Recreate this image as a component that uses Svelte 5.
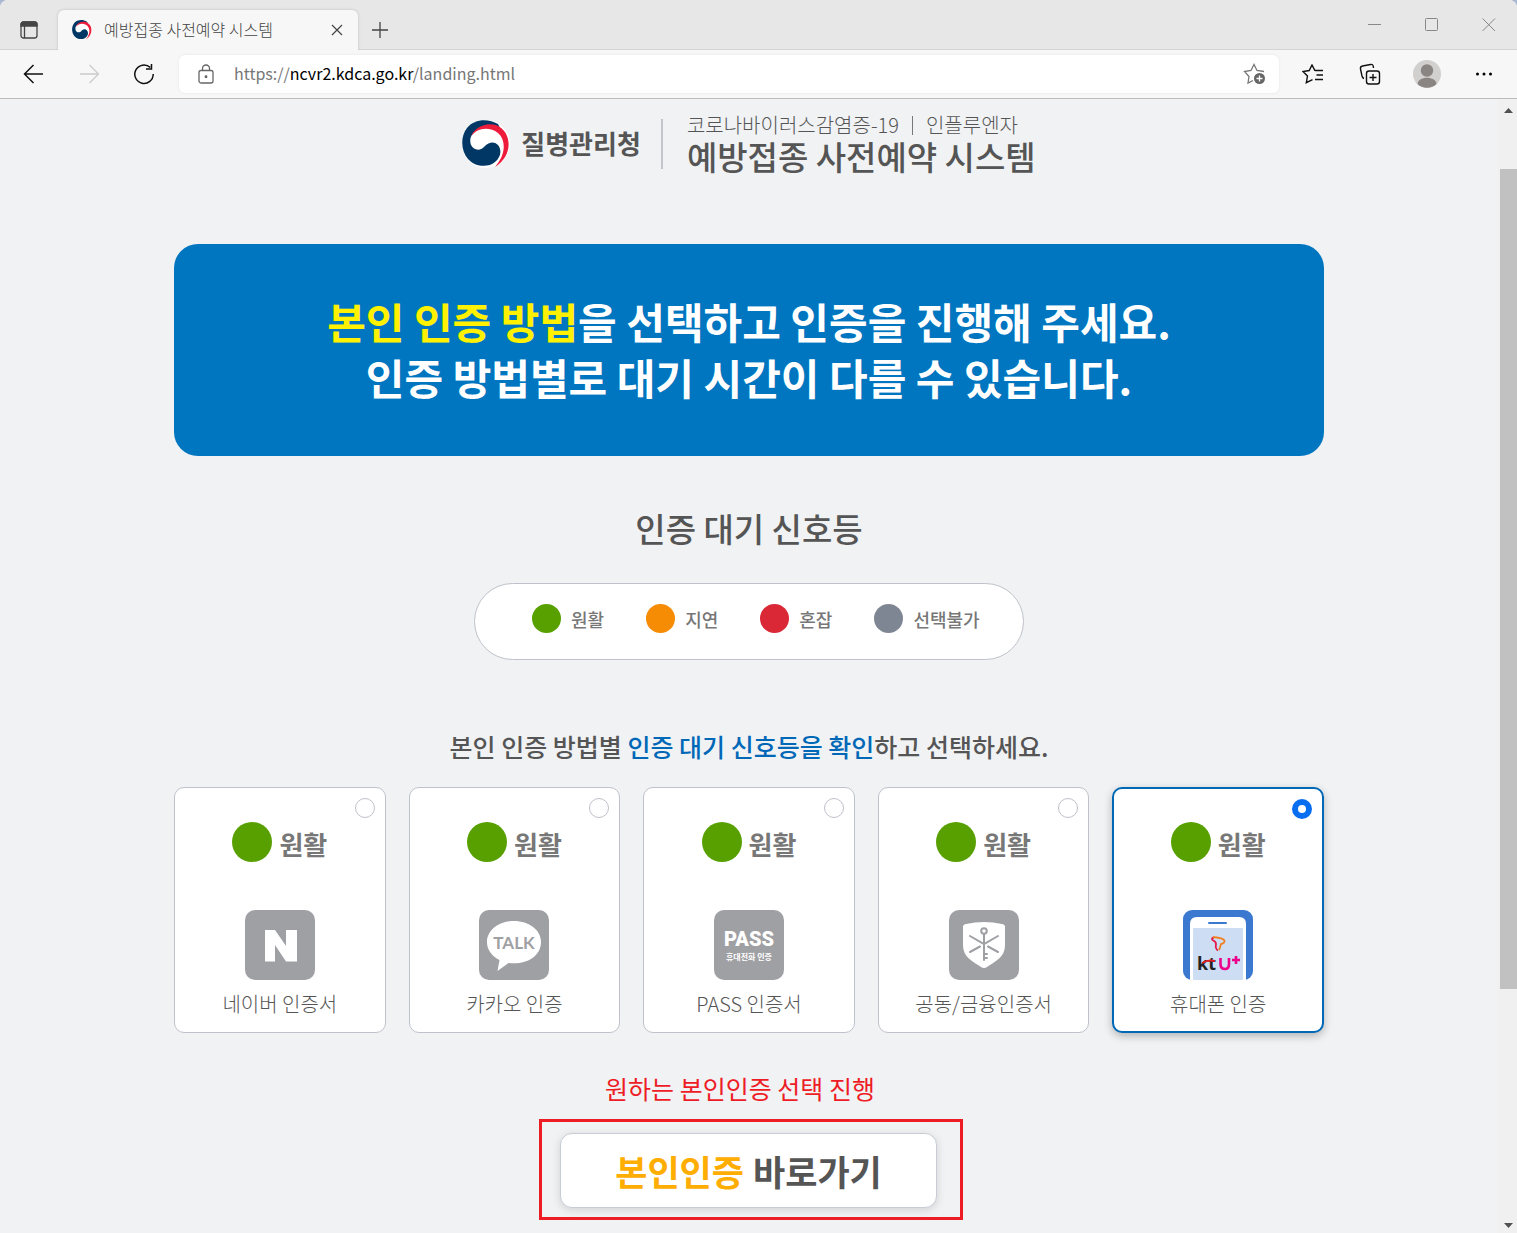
<script lang="ts">
  type Signal = "good" | "slow" | "busy" | "off";

  interface Method {
    id: string;
    label: string;
    signal: Signal;
  }

  const signalNames: Record<Signal, string> = {
    good: "원활",
    slow: "지연",
    busy: "혼잡",
    off: "선택불가",
  };

  const legend: Signal[] = ["good", "slow", "busy", "off"];

  const methods: Method[] = [
    { id: "naver", label: "네이버 인증서", signal: "good" },
    { id: "kakao", label: "카카오 인증", signal: "good" },
    { id: "pass", label: "PASS 인증서", signal: "good" },
    { id: "cert", label: "공동/금융인증서", signal: "good" },
    { id: "phone", label: "휴대폰 인증", signal: "good" },
  ];

  let selected = $state("phone");
  let address = $state("https://ncvr2.kdca.go.kr/landing.html");

  // the host is drawn darker than the rest of the address
  let urlParts = $derived(address.match(/^(https?:\/\/)([^/]*)(.*)$/) ?? ["", "", address, ""]);
</script>

{#snippet emblem()}
  <svg class="emblem" viewBox="0 0 48 48" aria-hidden="true">
    <circle cx="24" cy="24" r="24" fill="#fff" />
    <path
      d="M36 4C26 -2 12 -1 5 8C-2 17 -1 31 6 39C13 47 26 48 33 42C39 37 40 30 36 25C32 21 27 22 23 26C19 31 12 31 9 25C6 17 12 9 21 8L38 8Z"
      fill="#003764"
    />
    <path d="M9 17C12 7 24 2 34 5C51 12 51 36 33 47C43 36 45 21 36 13C27 6 14 8 9 17Z" fill="#ee1c3b" />
  </svg>
{/snippet}

<div class="browser">
  <div class="titlebar">
    <button class="tab-actions" aria-label="탭 작업 메뉴">
      <svg width="18" height="18" viewBox="0 0 18 18" fill="none" stroke="#444" stroke-width="1.3">
        <rect x="1" y="1" width="16" height="16" rx="2.5" />
        <path d="M1 3.5Q1 1 3.5 1H14.5Q17 1 17 3.5V5H1Z" fill="#444" />
        <path d="M4.5 5V17" />
      </svg>
    </button>
    <div class="tab">
      {@render emblem()}
      <span class="tab-title">예방접종 사전예약 시스템</span>
      <button aria-label="탭 닫기">
        <svg width="12" height="12" viewBox="0 0 12 12" stroke="#444" stroke-width="1.2">
          <path d="M1 1L11 11M11 1L1 11" />
        </svg>
      </button>
    </div>
    <button class="new-tab" aria-label="새 탭">
      <svg width="18" height="18" viewBox="0 0 18 18" stroke="#444" stroke-width="1.3">
        <path d="M9 1V17M1 9H17" />
      </svg>
    </button>
    <div class="window-buttons">
      <button aria-label="최소화">
        <svg width="14" height="14" viewBox="0 0 14 14" stroke="#888"><path d="M0 6.5H13" /></svg>
      </button>
      <button aria-label="최대화">
        <svg width="14" height="14" viewBox="0 0 14 14" stroke="#888" fill="none">
          <rect x="0.5" y="0.5" width="12" height="12" rx="1" />
        </svg>
      </button>
      <button aria-label="닫기">
        <svg width="14" height="14" viewBox="0 0 14 14" stroke="#888"><path d="M0.5 0.5L13 13M13 0.5L0.5 13" /></svg>
      </button>
    </div>
  </div>

  <div class="toolbar">
    <button aria-label="뒤로">
      <svg width="22" height="20" viewBox="0 0 22 20" fill="none" stroke="#111" stroke-width="1.5">
        <path d="M20 10H2M10.5 1L1.5 10L10.5 19" />
      </svg>
    </button>
    <button aria-label="앞으로" disabled>
      <svg width="22" height="20" viewBox="0 0 22 20" fill="none" stroke="#ccc" stroke-width="1.3">
        <path d="M2 10H20M11.5 1L20.5 10L11.5 19" />
      </svg>
    </button>
    <button aria-label="새로 고침">
      <svg width="22" height="22" viewBox="0 0 22 22" fill="none" stroke="#111" stroke-width="1.5">
        <path d="M17.2 4.4A9.2 9.2 0 1 0 20.2 11M18.5 1V6H13" />
      </svg>
    </button>
    <div class="address">
      <svg width="16" height="20" viewBox="0 0 16 20" fill="none" stroke="#666" stroke-width="1.3">
        <rect x="1" y="6.5" width="14" height="12.5" rx="2" />
        <path d="M4.5 6.5V4.5A3.5 3.5 0 0 1 11.5 4.5V6.5" />
        <circle cx="8" cy="12.7" r="0.8" fill="#666" />
      </svg>
      <a class="url" href="#top">{urlParts[1]}<b>{urlParts[2]}</b>{urlParts[3]}</a>
      <button aria-label="즐겨찾기에 추가">
        <svg width="24" height="22" viewBox="0 0 24 22" fill="none" stroke="#777" stroke-width="1.3">
          <path d="M21 8.5L14 7.5L11 1.5L8 7.5L1.5 8.5L6 13.5L5 20L10 17.5" />
          <circle cx="16.5" cy="15.5" r="5.5" fill="#666" stroke="none" />
          <path d="M16.5 12.5V18.5M13.5 15.5H19.5" stroke="#fff" />
        </svg>
      </button>
    </div>
    <div class="tools">
      <button aria-label="즐겨찾기">
        <svg width="22" height="20" viewBox="0 0 22 20" fill="none" stroke="#111" stroke-width="1.4">
          <path d="M14 6.7L12.8 6.3L10 1L7.2 6.5L1 7.5L5.5 12L4.3 18.7L10.5 15.7M13 6.5H21M14.5 11H21M13 15.5H21" />
        </svg>
      </button>
      <button aria-label="컬렉션">
        <svg width="22" height="22" viewBox="0 0 22 22" fill="none" stroke="#111" stroke-width="1.4">
          <rect x="7.5" y="8" width="13" height="13" rx="2.5" />
          <path d="M14 11V18M10.5 14.5H17.5M5 15.5Q3.5 15 3 13L1.5 6Q1 3.5 3.5 3L11.5 1.5Q14 1 14.3 3.5L14.5 5" />
        </svg>
      </button>
      <button aria-label="프로필">
        <svg width="28" height="28" viewBox="0 0 28 28">
          <circle cx="14" cy="14" r="14" fill="#d2d0ce" />
          <circle cx="14" cy="10.5" r="6.2" fill="#8a8582" />
          <path d="M4.5 24C5 15.5 23 15.5 23.5 24A14 14 0 0 1 4.5 24Z" fill="#8a8582" />
        </svg>
      </button>
      <button aria-label="설정 및 기타">
        <svg width="18" height="4" viewBox="0 0 18 4">
          <circle cx="2.5" cy="2" r="1.5" /><circle cx="9" cy="2" r="1.5" /><circle cx="15.5" cy="2" r="1.5" />
        </svg>
      </button>
    </div>
  </div>

  <div class="viewport">
    <main id="top">
      <header>
        {@render emblem()}
        <strong class="agency">질병관리청</strong>
        <div class="site">
          <p>코로나바이러스감염증-19 <i></i> 인플루엔자</p>
          <h1>예방접종 사전예약 시스템</h1>
        </div>
      </header>

      <section class="banner">
        <p><em>본인 인증 방법</em>을 선택하고 인증을 진행해 주세요.</p>
        <p>인증 방법별로 대기 시간이 다를 수 있습니다.</p>
      </section>

      <h2>인증 대기 신호등</h2>
      <ul class="legend">
        {#each legend as signal}
          <li><span class="dot {signal}"></span>{signalNames[signal]}</li>
        {/each}
      </ul>

      <h3>본인 인증 방법별 <em>인증 대기 신호등을 확인</em>하고 선택하세요.</h3>

      <div class="methods">
        {#each methods as method (method.id)}
          <label class="card" class:selected={selected === method.id}>
            <input type="radio" name="method" value={method.id} bind:group={selected} />
            <span class="state"><span class="dot {method.signal}"></span><b>{signalNames[method.signal]}</b></span>
            <svg class="logo" viewBox="0 0 70 70" aria-hidden="true">
              {#if method.id !== "phone"}
                <rect width="70" height="70" rx="10" fill="#9fa0a4" />
              {/if}
              {#if method.id === "naver"}
                <path d="M20 20H30L41 36V20H52V51.5H41L30 35V51.5H20Z" fill="#fff" />
              {:else if method.id === "kakao"}
                <path
                  d="M35 11C20 11 8 20 8 32C8 40 13 46 20.5 50L18.5 61L29.5 53C48 55 62 46 62 32C62 20 50 11 35 11Z"
                  fill="#fff"
                />
                <text class="talk" x="35" y="39" text-anchor="middle">TALK</text>
              {:else if method.id === "pass"}
                <text class="pass" x="35" y="36" text-anchor="middle">PASS</text>
                <text class="pass-sub" x="35" y="50" text-anchor="middle">휴대전화 인증</text>
              {:else if method.id === "cert"}
                <path
                  d="M14 16Q15 14 17 14Q35 10 53 14Q55 14 56 16V35C56 47 47 51 38 57Q35 59 32 57C23 51 14 47 14 35Z"
                  fill="#fff"
                />
                <g fill="none" stroke="#9fa0a4" stroke-width="2" stroke-linecap="round">
                  <circle cx="35" cy="21" r="2.8" />
                  <path d="M35 24V50M21 26L35 34L49 26M21 42L31 36.5M49 42L39 36.5M36 44H38M36 48H38" />
                </g>
              {:else}
                <rect width="70" height="70" rx="9" fill="#3b78d0" />
                <path d="M7 70V14Q7 7 14 7H56Q63 7 63 14V70Z" fill="#fff" />
                <rect x="10" y="18" width="50" height="52" rx="1" fill="#cdddf3" />
                <path d="M26 13H43" stroke="#3b78d0" stroke-width="2" stroke-linecap="round" />
                <g fill="none" stroke-width="1.8" stroke-linejoin="round">
                  <path d="M31 27.5Q28 28 29.5 30Q33 31.5 33 34Q32 39 35 40.5" stroke="#e6194b" />
                  <path d="M30 27Q42 28 41.5 31.5Q41 33.5 38 34Q37 38 36 40" stroke="#f08028" />
                </g>
                <text class="kt" x="14" y="60">kt</text>
                <path d="M19 53Q25 49.5 32 51" fill="none" stroke="#e01f26" stroke-width="2" />
                <path
                  d="M37.5 48V54Q37.5 59 42 59Q46 59 46 54V48M49 50H57M53 46V54"
                  fill="none"
                  stroke="#ec008c"
                  stroke-width="2.6"
                />
              {/if}
            </svg>
            <span class="name">{method.label}</span>
          </label>
        {/each}
      </div>

      <p class="note">원하는 본인인증 선택 진행</p>
      <div class="highlight">
        <button class="go"><em>본인인증</em> 바로가기</button>
      </div>
    </main>

    <div class="scrollbar" aria-hidden="true">
      <svg width="9" height="5" viewBox="0 0 9 5"><path d="M0 5L4.5 0L9 5Z" /></svg>
      <span class="thumb"></span>
      <svg width="9" height="5" viewBox="0 0 9 5"><path d="M0 0L4.5 5L9 0Z" /></svg>
    </div>
  </div>
</div>

<style>
  :global(body) {
    background: #a9b7d0;
  }

  .browser {
    display: flex;
    flex-direction: column;
    height: 100vh;
    overflow: hidden;
    border-radius: 8px 8px 0 0;
    background: #f0f2f4;
    color: #555;
    font-family: "Noto Sans CJK KR", sans-serif;
  }

  .browser * {
    box-sizing: border-box;
  }

  button {
    display: flex;
    align-items: center;
    justify-content: center;
    padding: 0;
    border: none;
    background: none;
    font-family: inherit;
    cursor: pointer;
  }

  svg {
    display: block;
    flex: none;
  }

  p,
  h1,
  h2,
  h3,
  ul {
    margin: 0;
    padding: 0;
  }

  em {
    font-style: normal;
  }

  /* browser chrome */
  .titlebar {
    display: flex;
    align-items: flex-end;
    flex: none;
    height: 50px;
    background: #e7e7e7;
    box-shadow: inset 0 -1px #d4d4d4;
  }

  .tab-actions {
    width: 58px;
    height: 40px;
  }

  .tab {
    display: flex;
    align-items: center;
    gap: 12px;
    width: 300px;
    height: 40px;
    padding: 0 15px 0 14px;
    border-radius: 6px 6px 0 0;
    background: #f7f7f7;
    box-shadow: 0 0 3px #bbb;
    clip-path: inset(-4px -4px 0);
  }

  .tab .emblem {
    width: 20px;
    height: 20px;
  }

  .tab-title {
    flex: 1;
    padding-bottom: 2px;
    color: #444;
    font-size: 16px;
    font-weight: 300;
    white-space: nowrap;
  }

  .new-tab {
    width: 43px;
    height: 40px;
  }

  .window-buttons {
    display: flex;
    align-self: stretch;
    margin-left: auto;
  }

  .window-buttons button {
    width: 57px;
  }

  .toolbar {
    display: flex;
    align-items: center;
    flex: none;
    height: 49px;
    padding: 0 5px 0 6px;
    border-bottom: 1px solid #bcbcbc;
    background: #f7f7f7;
  }

  .toolbar > button {
    width: 55px;
    height: 40px;
  }

  .tools button {
    width: 57px;
    height: 40px;
  }

  .address {
    display: flex;
    align-items: center;
    flex: 1;
    gap: 20px;
    height: 38px;
    margin: 0 5px 0 8px;
    padding: 0 12px 0 19px;
    border-radius: 6px;
    background: #fff;
    box-shadow: 0 0 3px #e4e4e4;
  }

  .url {
    flex: 1;
    padding-bottom: 2px;
    color: #767676;
    font-size: 16px;
    text-decoration: none;
  }

  .url b {
    color: #000;
    font-weight: 400;
  }

  .tools {
    display: flex;
  }

  /* page */
  .viewport {
    display: flex;
    flex: 1;
    min-height: 0;
  }

  main {
    display: flex;
    flex-direction: column;
    align-items: center;
    flex: 1;
    padding: 20px 24px 0;
    overflow: hidden;
  }

  header {
    display: flex;
    align-items: center;
  }

  header .emblem {
    width: 48px;
    height: 48px;
  }

  .agency {
    padding: 0 20px 3px 11px;
    font-size: 26px;
    line-height: 44px;
  }

  .site {
    display: flex;
    flex-direction: column;
    justify-content: center;
    height: 50px;
    padding: 0 0 4px 24px;
    border-left: 2px solid #c3c5cc;
  }

  .site p {
    display: flex;
    align-items: center;
    gap: 13px;
    font-size: 20px;
    font-weight: 300;
    line-height: 28px;
  }

  .site i {
    width: 1px;
    height: 19px;
    background: #777;
  }

  h1 {
    font-size: 33px;
    font-weight: 500;
    line-height: 34px;
  }

  .banner {
    width: 100%;
    max-width: 1150px;
    margin-top: 75px;
    padding: 49px 24px 51px;
    border-radius: 24px;
    background: #0076c0;
    color: #fff;
    font-size: 42px;
    font-weight: 700;
    line-height: 56px;
    text-align: center;
  }

  .banner em {
    color: #fff100;
  }

  h2 {
    margin-top: 48px;
    font-size: 33px;
    font-weight: 500;
    line-height: 48px;
  }

  .legend {
    display: flex;
    align-items: center;
    flex: none;
    gap: 42px;
    width: 550px;
    height: 77px;
    margin-top: 31px;
    padding: 0 0 6px 57px;
    border: 1px solid #c0c2cb;
    border-radius: 39px;
    background: #fff;
    color: #777;
    font-size: 18px;
    font-weight: 500;
    list-style: none;
  }

  .legend li {
    display: flex;
    align-items: center;
    gap: 10px;
  }

  .dot {
    width: 29px;
    height: 29px;
    border-radius: 50%;
  }

  .good {
    background: #58a000;
  }

  .slow {
    background: #f68b04;
  }

  .busy {
    background: #da2837;
  }

  .off {
    background: #7f8693;
  }

  h3 {
    margin-top: 68px;
    font-size: 25px;
    font-weight: 500;
    line-height: 36px;
  }

  h3 em {
    color: #0068b7;
  }

  .methods {
    display: grid;
    grid-template-columns: repeat(5, 1fr);
    gap: 23px;
    width: 100%;
    max-width: 1150px;
    margin-top: 23px;
  }

  .card {
    position: relative;
    display: flex;
    flex-direction: column;
    align-items: center;
    height: 246px;
    padding-top: 34px;
    border: 1px solid #c0c2cb;
    border-radius: 10px;
    background: #fff;
    cursor: pointer;
  }

  .card.selected {
    padding-top: 33px;
    border: 2px solid #0068b7;
    box-shadow: 0 3px 8px #0004;
  }

  .card input {
    position: absolute;
    top: 10px;
    right: 10px;
    width: 20px;
    height: 20px;
    margin: 0;
    border: 1px solid #c0c2cb;
    border-radius: 50%;
    appearance: none;
  }

  .card input:checked {
    border: 6px solid #076ef0;
  }

  .state {
    display: flex;
    align-items: flex-start;
    gap: 7px;
    height: 40px;
    color: #777;
    font-size: 26px;
    line-height: 40px;
  }

  .state b {
    padding-top: 2px;
  }

  .state .dot {
    width: 40px;
    height: 40px;
  }

  .logo {
    width: 70px;
    height: 70px;
    margin-top: 48px;
  }

  .talk {
    fill: #9fa0a4;
    font: 700 17px Lato, sans-serif;
  }

  .pass {
    fill: #fff;
    font: 900 20px Roboto, sans-serif;
  }

  .pass-sub {
    fill: #fff;
    font-size: 8px;
    font-weight: 700;
  }

  .kt {
    fill: #222;
    font: 700 18px "Open Sans", sans-serif;
  }

  .name {
    margin-top: 9px;
    font-size: 20px;
    font-weight: 300;
    line-height: 30px;
  }

  .note {
    margin-top: 37px;
    padding-right: 18px;
    color: #ee1c25;
    font-size: 25px;
    line-height: 36px;
  }

  .highlight {
    margin-top: 13px;
    margin-left: 4px;
    padding: 11px 23px 9px 18px;
    border: 3px solid #ee1c25;
  }

  .go {
    gap: 9px;
    width: 377px;
    height: 75px;
    border: 1px solid #c8ccd6;
    border-radius: 12px;
    background: #fff;
    box-shadow: 0 2px 10px #0002;
    color: #555;
    font-size: 35px;
    font-weight: 700;
  }

  .go em {
    color: #ffad00;
  }

  .scrollbar {
    display: flex;
    flex-direction: column;
    align-items: flex-end;
    width: 19px;
    padding: 9px 0 5px;
    background: #f0f0f0;
    fill: #505050;
  }

  .scrollbar svg {
    margin-right: 4px;
  }

  .thumb {
    width: 17px;
    height: 820px;
    margin: 56px 0 auto;
    background: #c1c1c1;
  }
</style>
